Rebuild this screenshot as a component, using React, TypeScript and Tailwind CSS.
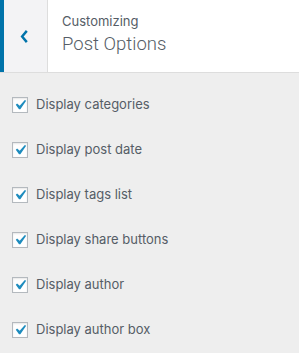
import React from "react";

const options = [
  "Display categories",
  "Display post date",
  "Display tags list",
  "Display share buttons",
  "Display author",
  "Display author box",
];

const CheckBox = () => (
  <span className="flex h-4 w-4 shrink-0 items-center justify-center border border-[#b4b9be] bg-white shadow-[inset_0_1px_2px_rgba(0,0,0,0.1)]">
    <svg viewBox="0 0 20 20" className="-ml-[1px] h-[20px] w-[20px] shrink-0" fill="#1e8cbe">
      <path d="M14.83 4.89l1.34.94-5.81 8.38H9.02L5.78 9.67l1.34-1.25 2.57 2.4z" />
    </svg>
  </span>
);

export default function App() {
  return (
    <div
      className="h-[353px] w-[299px] bg-[#eeeeee] text-[#555d66]"
      style={{ fontFamily: "Inter, 'Noto Sans', sans-serif" }}
    >
      {/* Header */}
      <div className="flex h-[73px] border-b border-[#dddddd] bg-white">
        <button className="flex w-12 items-center justify-center border-l-4 border-r border-l-[#0073aa] border-r-[#dddddd] bg-[#f3f3f5] pr-1">
          <svg viewBox="0 0 10 16" className="h-[15px] w-[10px]" fill="none" stroke="#0073aa" strokeWidth="2.6">
            <path d="M8 2L3 8l5 6" />
          </svg>
        </button>
        <div className="flex flex-col justify-center pl-[14px] pb-[2px]">
          <span className="text-[13px] leading-[18px] text-[#555d66]">Customizing</span>
          <span
            className="text-[18.5px] font-light leading-[28px] text-[#555d66]"
            style={{ fontFamily: "Roboto, sans-serif" }}
          >
            Post Options
          </span>
        </div>
      </div>

      {/* Options */}
      <div className="flex flex-col px-3 pt-[9px]">
        {options.map((label) => (
          <label key={label} className="flex h-[45px] items-center gap-2">
            <CheckBox />
            <span className="text-[13px] text-[#555d66]">{label}</span>
          </label>
        ))}
      </div>
    </div>
  );
}
